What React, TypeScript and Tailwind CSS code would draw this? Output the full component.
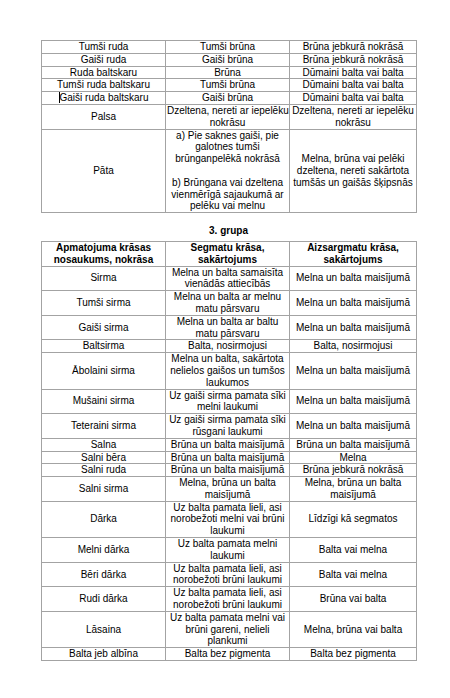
import React from "react";

type Row = { a: string; b: string[]; c: string[]; caret?: boolean };

const font = { fontFamily: '"Liberation Sans", Arial, sans-serif' };

const group2: Row[] = [
  { a: "Tumši ruda", b: ["Tumši brūna"], c: ["Brūna jebkurā nokrāsā"] },
  { a: "Gaiši ruda", b: ["Gaiši brūna"], c: ["Brūna jebkurā nokrāsā"] },
  { a: "Ruda baltskaru", b: ["Brūna"], c: ["Dūmaini balta vai balta"] },
  { a: "Tumši ruda baltskaru", b: ["Tumši brūna"], c: ["Dūmaini balta vai balta"] },
  { a: "Gaiši ruda baltskaru", b: ["Gaiši brūna"], c: ["Dūmaini balta vai balta"], caret: true },
  { a: "Palsa", b: ["Dzeltena, nereti ar iepelēku", "nokrāsu"], c: ["Dzeltena, nereti ar iepelēku", "nokrāsu"] },
  {
    a: "Pāta",
    b: [
      "a) Pie saknes gaiši, pie",
      "galotnes tumši",
      "brūnganpelēkā nokrāsā",
      "",
      "b) Brūngana vai dzeltena",
      "vienmērīgā sajaukumā ar",
      "pelēku vai melnu",
    ],
    c: ["Melna, brūna vai pelēki", "dzeltena, nereti sakārtota", "tumšās un gaišās šķipsnās"],
  },
];

const group3: Row[] = [
  { a: "Sirma", b: ["Melna un balta samaisīta", "vienādās attiecībās"], c: ["Melna un balta maisījumā"] },
  { a: "Tumši sirma", b: ["Melna un balta ar melnu", "matu pārsvaru"], c: ["Melna un balta maisījumā"] },
  { a: "Gaiši sirma", b: ["Melna un balta ar baltu", "matu pārsvaru"], c: ["Melna un balta maisījumā"] },
  { a: "Baltsirma", b: ["Balta, nosirmojusi"], c: ["Balta, nosirmojusi"] },
  {
    a: "Ābolaini sirma",
    b: ["Melna un balta, sakārtota", "nelielos gaišos un tumšos", "laukumos"],
    c: ["Melna un balta maisījumā"],
  },
  { a: "Mušaini sirma", b: ["Uz gaiši sirma pamata sīki", "melni laukumi"], c: ["Melna un balta maisījumā"] },
  { a: "Teteraini sirma", b: ["Uz gaiši sirma pamata sīki", "rūsgani laukumi"], c: ["Melna un balta maisījumā"] },
  { a: "Salna", b: ["Brūna un balta maisījumā"], c: ["Brūna un balta maisījumā"] },
  { a: "Salni bēra", b: ["Brūna un balta maisījumā"], c: ["Melna"] },
  { a: "Salni ruda", b: ["Brūna un balta maisījumā"], c: ["Brūna jebkurā nokrāsā"] },
  { a: "Salni sirma", b: ["Melna, brūna un balta", "maisījumā"], c: ["Melna, brūna un balta", "maisījumā"] },
  {
    a: "Dārka",
    b: ["Uz balta pamata lieli, asi", "norobežoti melni vai brūni", "laukumi"],
    c: ["Līdzīgi kā segmatos"],
  },
  { a: "Melni dārka", b: ["Uz balta pamata melni", "laukumi"], c: ["Balta vai melna"] },
  { a: "Bēri dārka", b: ["Uz balta pamata lieli, asi", "norobežoti brūni laukumi"], c: ["Balta vai melna"] },
  { a: "Rudi dārka", b: ["Uz balta pamata lieli, asi", "norobežoti brūni laukumi"], c: ["Brūna vai balta"] },
  {
    a: "Lāsaina",
    b: ["Uz balta pamata melni vai", "brūni gareni, nelieli", "plankumi"],
    c: ["Melna, brūna vai balta"],
  },
  { a: "Balta jeb albīna", b: ["Balta bez pigmenta"], c: ["Balta bez pigmenta"] },
];

const cell = "border border-[#a3a3a3] px-px text-center align-middle whitespace-nowrap";

function Lines({ lines }: { lines: string[] }) {
  return (
    <>
      {lines.map((l, i) => (
        <div key={i} className="h-[11.8px]">
          {l}
        </div>
      ))}
    </>
  );
}

function TableRow({ r }: { r: Row }) {
  return (
    <tr>
      <td className={cell}>
        {r.caret && <span className="inline-block w-px h-[11px] bg-black align-[-2px]" />}
        {r.a}
      </td>
      <td className={cell}>
        <Lines lines={r.b} />
      </td>
      <td className={cell}>
        <Lines lines={r.c} />
      </td>
    </tr>
  );
}

function Cols() {
  return (
    <colgroup>
      <col className="w-[124px]" />
      <col className="w-[124px]" />
      <col className="w-[127px]" />
    </colgroup>
  );
}

export default function App() {
  return (
    <div className="min-h-[698px] w-[450px] bg-white text-black" style={font}>
      <div className="pt-[40px] pl-[41px] text-[10px] leading-[11.8px]">
        <table className="table-fixed border-collapse w-[375px]">
          <Cols />
          <tbody>
            {group2.map((r) => (
              <TableRow key={r.a} r={r} />
            ))}
          </tbody>
        </table>

        <div className="w-[375px] text-center font-bold pt-[12px] pb-[4px] text-[10px]">3. grupa</div>

        <table className="table-fixed border-collapse w-[375px]">
          <Cols />
          <thead>
            <tr className="font-bold">
              <th className={cell}>
                <Lines lines={["Apmatojuma krāsas", "nosaukums, nokrāsa"]} />
              </th>
              <th className={cell}>
                <Lines lines={["Segmatu krāsa,", "sakārtojums"]} />
              </th>
              <th className={cell}>
                <Lines lines={["Aizsargmatu krāsa,", "sakārtojums"]} />
              </th>
            </tr>
          </thead>
          <tbody>
            {group3.map((r) => (
              <TableRow key={r.a} r={r} />
            ))}
          </tbody>
        </table>
      </div>
    </div>
  );
}
